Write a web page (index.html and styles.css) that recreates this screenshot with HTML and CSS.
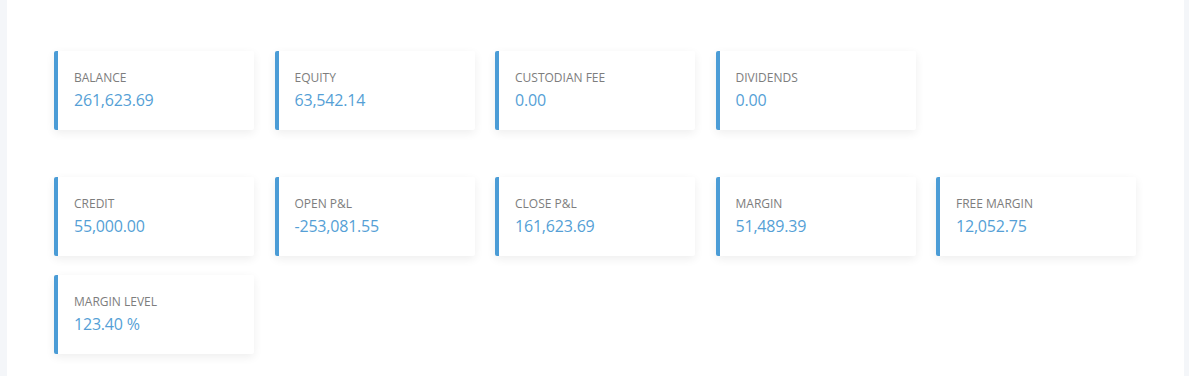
FILE: index.html
```html
<!DOCTYPE html>
<html lang="en">
<head>
    <meta charset="UTF-8">
    <meta name="viewport" content="width=device-width, initial-scale=1.0">
    <title>Account Summary</title>
    <link rel="stylesheet" href="styles.css">
</head>
<body>
    <div class="panel">
        <div class="stats stats-top">
            <div class="stat">
                <p class="label">BALANCE</p>
                <p class="value">261,623.69</p>
            </div>
            <div class="stat">
                <p class="label">EQUITY</p>
                <p class="value">63,542.14</p>
            </div>
            <div class="stat">
                <p class="label">CUSTODIAN FEE</p>
                <p class="value">0.00</p>
            </div>
            <div class="stat">
                <p class="label">DIVIDENDS</p>
                <p class="value">0.00</p>
            </div>
        </div>

        <div class="stats">
            <div class="stat">
                <p class="label">CREDIT</p>
                <p class="value">55,000.00</p>
            </div>
            <div class="stat">
                <p class="label">OPEN P&amp;L</p>
                <p class="value">-253,081.55</p>
            </div>
            <div class="stat">
                <p class="label">CLOSE P&amp;L</p>
                <p class="value">161,623.69</p>
            </div>
            <div class="stat">
                <p class="label">MARGIN</p>
                <p class="value">51,489.39</p>
            </div>
            <div class="stat">
                <p class="label">FREE MARGIN</p>
                <p class="value">12,052.75</p>
            </div>
            <div class="stat">
                <p class="label">MARGIN LEVEL</p>
                <p class="value">123.40 %</p>
            </div>
        </div>
    </div>
</body>
</html>
```

FILE: styles.css
```css
* {
    margin: 0;
    padding: 0;
    box-sizing: border-box;
    font-family: "Open Sans", sans-serif;
}

body {
    background: #f4f6f9;
    height: 376px;
    overflow: hidden;
}

.panel {
    margin-left: 7px;
    width: 1177px;
    height: 376px;
    background: #fff;
    padding: 51px 0 0 47px;
}

.stats {
    display: flex;
    flex-wrap: wrap;
    gap: 19px 20.5px;
    width: 1110px;
}

.stats-top {
    margin-bottom: 47px;
}

.stat {
    width: 200px;
    height: 79px;
    background: #fff;
    border-left: 4px solid #4b9cd6;
    border-radius: 2px;
    box-shadow: 0 3px 10px rgba(0, 0, 0, 0.07);
    padding: 19px 16px 0;
}

.label {
    font-size: 12px;
    line-height: 16px;
    color: #7d7d7d;
}

.value {
    margin-top: 3px;
    font-size: 16px;
    line-height: 22px;
    letter-spacing: -0.2px;
    color: #559fd6;
}
```
